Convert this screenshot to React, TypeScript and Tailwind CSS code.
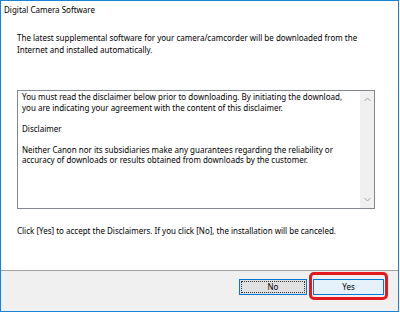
export default function App() {
  const font = { fontFamily: '"Noto Sans", sans-serif' };
  return (
    <div className="relative w-[400px] h-[313px] bg-white text-black text-[8px]" style={font}>
      <div className="w-[399px] h-[312px] border border-[#1883d7] flex flex-col">
        <div className="h-[20px] pl-[3px] pt-[3px] leading-[12px]">Digital Camera Software</div>
        <div className="flex-1 flex flex-col pl-[16px] pr-[22px]">
          <p className="pt-[11px] leading-[12px]">
            The latest supplemental software for your camera/camcorder will be downloaded from the
            <br />
            Internet and installed automatically.
          </p>
          <div className="mt-[34px] h-[119px] w-[358px] border border-[#828790] flex">
            <div className="flex-1 pl-[4px] pt-[1px] leading-[10.5px]">
              <p>You must read the disclaimer below prior to downloading. By initiating the download,<br />you are indicating your agreement with the content of this disclaimer.</p>
              <p className="mt-[10.5px]">Disclaimer</p>
              <p className="mt-[10.5px]">Neither Canon nor its subsidiaries make any guarantees regarding the reliability or<br />accuracy of downloads or results obtained from downloads by the customer.</p>
            </div>
            <div className="w-[14px] bg-[#f0f0f0] flex flex-col justify-between items-center py-[6px]">
              <svg width="7" height="5" viewBox="0 0 7 5"><path d="M0.5 4 L3.5 1 L6.5 4" fill="none" stroke="#a3a3a3" strokeWidth="1" /></svg>
              <svg width="7" height="5" viewBox="0 0 7 5"><path d="M0.5 1 L3.5 4 L6.5 1" fill="none" stroke="#a3a3a3" strokeWidth="1" /></svg>
            </div>
          </div>
          <p className="mt-[16px] leading-[12px] whitespace-nowrap">Click [Yes] to accept the Disclaimers. If you click [No], the installation will be canceled.</p>
        </div>
        <div className="h-[41px] border-t border-[#a0a0a0] bg-[#f0f0f0] flex justify-end items-start pt-[8px] pr-[14px] gap-[6px]">
          <button className="w-[68px] h-[16px] border border-[#0078d7] bg-[#e1e1e1] p-[1px] flex">
            <span className="flex-1 border border-dotted border-[#333] flex items-center justify-center leading-[10px]">No</span>
          </button>
          <div className="relative">
            <button className="w-[71px] h-[16px] border border-[#0078d7] bg-[#e5f1fb] flex items-center justify-center leading-[10px]">Yes</button>
            <div className="absolute left-[-4px] top-[-7px] w-[79px] h-[28px] border-[3px] border-[#e3191e] rounded-[5px]" />
          </div>
        </div>
      </div>
    </div>
  );
}
